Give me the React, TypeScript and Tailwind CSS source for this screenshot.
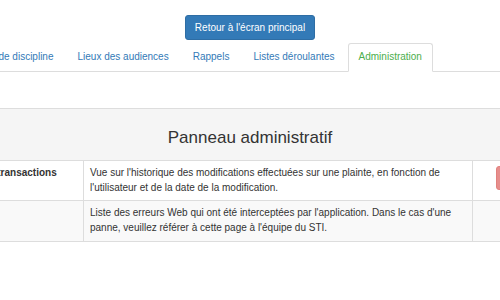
import React from "react";

const tabs = [
  { label: "Comité de discipline", active: false },
  { label: "Lieux des audiences", active: false },
  { label: "Rappels", active: false },
  { label: "Listes déroulantes", active: false },
  { label: "Administration", active: true },
];

const rows = [
  {
    name: "Historique des transactions",
    desc: "Vue sur l'historique des modifications effectuées sur une plainte, en fonction de l'utilisateur et de la date de la modification.",
    action: true,
  },
  {
    name: "Erreurs Web",
    desc: "Liste des erreurs Web qui ont été interceptées par l'application. Dans le cas d'une panne, veuillez référer à cette page à l'équipe du STI.",
    action: false,
  },
];

const App: React.FC = () => {
  return (
    <div className="w-[500px] h-[300px] overflow-hidden bg-white text-[10px] text-[#333] font-['Liberation_Sans',Arial,sans-serif]">
      <div className="flex justify-center pt-[15px]">
        <button
          type="button"
          className="h-[25px] px-[9px] leading-[14px] rounded-[3px] border border-[#2e6da4] bg-[#337ab7] text-white"
        >
          Retour à l'écran principal
        </button>
      </div>

      <ul className="mt-[3px] flex border-b border-[#ddd] ml-[-47px] w-[600px]">
        {tabs.map((t) => (
          <li key={t.label} className="mr-[2px] mb-[-1px] shrink-0">
            <a
              className={
                t.active
                  ? "block whitespace-nowrap px-[10px] pt-[6px] pb-[7px] leading-[14px] border border-[#ddd] border-b-white bg-white rounded-t-[3px] text-[#4cae4c]"
                  : "block whitespace-nowrap px-[10px] pt-[6px] pb-[7px] leading-[14px] border border-transparent text-[#337ab7]"
              }
            >
              {t.label}
            </a>
          </li>
        ))}
      </ul>

      <div className="mt-[36px] flex justify-center">
        <div className="w-[664px] shrink-0 border border-[#ddd]">
          <div className="h-[52px] bg-[#f5f5f5] border-b border-[#ddd] pt-[19px]">
            <h3 className="text-center text-[17px] leading-[19px] text-[#333]">Panneau administratif</h3>
          </div>
          {rows.map((r, i) => (
            <div
              key={r.name}
              className={
                "grid grid-cols-[165px_389px_1fr] h-[40px] " +
                (i === 0 ? "bg-white border-b border-[#ddd]" : "bg-[#f9f9f9]")
              }
            >
              <div className="border-r border-[#ddd] px-[6px] py-[5px] leading-[14.5px] font-bold whitespace-nowrap">
                {r.name}
              </div>
              <div className="border-r border-[#ddd] px-[6px] py-[5px] leading-[14.5px]">{r.desc}</div>
              <div className="flex justify-center py-[5px]">
                {r.action && (
                  <button
                    type="button"
                    disabled
                    className="h-[24px] px-[7px] leading-[14px] rounded-[3px] border border-[#d43f3a] bg-[#d9534f] text-white opacity-65"
                  >
                    Supprimer
                  </button>
                )}
              </div>
            </div>
          ))}
        </div>
      </div>
    </div>
  );
};

export default App;
